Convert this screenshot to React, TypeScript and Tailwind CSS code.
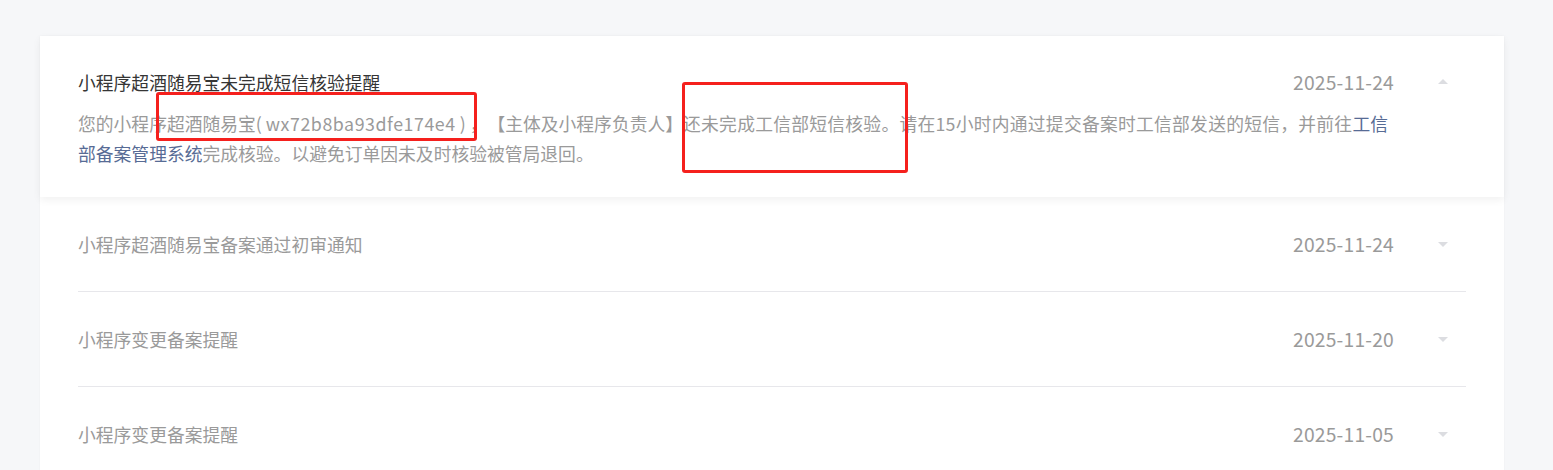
import React from "react";

const font = { fontFamily: '"Noto Sans CJK SC", "Noto Sans", sans-serif' };

const rows = [
  { title: "小程序超酒随易宝备案通过初审通知", date: "2025-11-24" },
  { title: "小程序变更备案提醒", date: "2025-11-20" },
  { title: "小程序变更备案提醒", date: "2025-11-05" },
];

function Caret({ up }: { up?: boolean }) {
  return (
    <span
      className={`block w-0 h-0 border-x-[5px] border-x-transparent ${
        up ? "border-b-[5px] border-b-[#dcdde1]" : "border-t-[5px] border-t-[#dcdde1]"
      }`}
    />
  );
}

export default function App() {
  return (
    <div
      className="relative w-[1553px] h-[470px] overflow-hidden bg-[#f6f7f9] pt-[36px] pl-[40px] [text-spacing-trim:space-all]"
      style={font}
    >
      <div className="w-[1464px] bg-white shadow-[0_0_2px_rgba(0,0,0,0.04)]">
        {/* expanded item */}
        <div className="relative z-10 bg-white px-[38px] pt-[31px] pb-[29px] shadow-[0_3px_8px_rgba(0,0,0,0.06)]">
          <div className="flex items-center h-[30px]">
            <span className="flex-1 text-[17.8px] text-[#353535]">小程序超酒随易宝未完成短信核验提醒</span>
            <span className="text-[19.3px] text-[#9a9a9a] tracking-[0.2px]">2025-11-24</span>
            <span className="w-[72px] flex justify-end pr-[18px] pb-[2px]">
              <Caret up />
            </span>
          </div>
          <p className="mt-[11px] text-[17.8px] leading-[30px] text-[#9a9a9a] whitespace-nowrap">
            您的小程序超酒随易宝( <span className="tracking-[0.55px]">wx72b8ba93dfe174e4</span> ) ，【主体及小程序负责人】
            <span className="tracking-[0.25px]">还未完成工信部短信核验。请在15小时内通过提交备案时工信部发送的短信，并前往</span>
            <span className="text-[#576b95]">工信</span>
            <br />
            <span className="text-[#576b95]">部备案管理系统</span>完成核验。以避免订单因未及时核验被管局退回。
          </p>
        </div>

        {/* collapsed items */}
        <div className="px-[38px]">
          {rows.map((r, i) => (
            <div
              key={i}
              className={`flex items-center h-[95px] ${i < rows.length - 1 ? "border-b border-[#e7e7eb]" : ""}`}
            >
              <span className="flex-1 text-[17.8px] text-[#9a9a9a]">{r.title}</span>
              <span className="text-[19.3px] text-[#9a9a9a] tracking-[0.2px]">{r.date}</span>
              <span className="w-[72px] flex justify-end pr-[18px]">
                <Caret />
              </span>
            </div>
          ))}
        </div>
      </div>

      {/* annotation boxes */}
      <div className="absolute z-20 left-[156px] top-[92px] w-[321px] h-[49px] border-[3px] border-[#f5201d] rounded-[3px]" />
      <div className="absolute z-20 left-[682px] top-[82px] w-[226px] h-[91px] border-[3px] border-[#f5201d] rounded-[3px]" />
    </div>
  );
}
